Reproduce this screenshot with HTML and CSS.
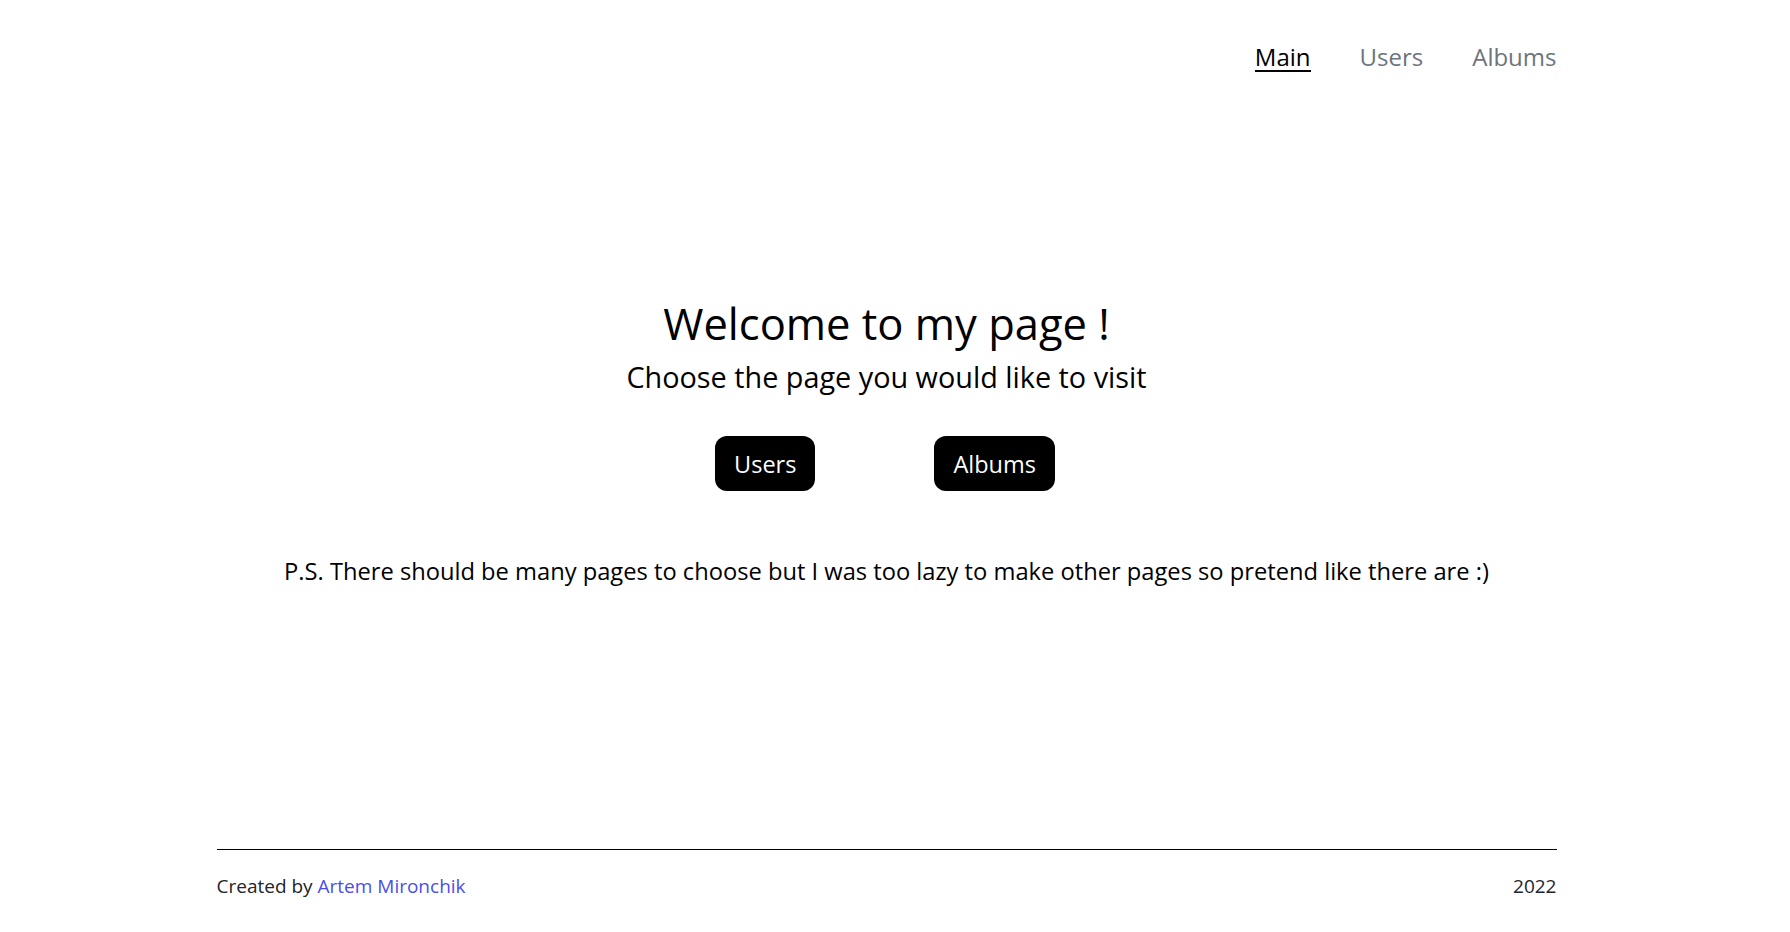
FILE: index.html
```html
<!DOCTYPE html>
<html lang="en">
<head>
<meta charset="utf-8">
<title>Main</title>
<link rel="stylesheet" href="styles.css">
</head>
<body>
<div class="page">
  <div class="container">
    <header class="header">
      <nav class="nav">
        <a class="nav-link active" href="#">Main</a>
        <a class="nav-link" href="#">Users</a>
        <a class="nav-link" href="#">Albums</a>
      </nav>
    </header>
    <main class="hero">
      <h1 class="hero-title">Welcome to my page !</h1>
      <p class="hero-subtitle">Choose the page you would like to visit</p>
      <div class="hero-buttons">
        <a class="btn" href="#">Users</a>
        <a class="btn" href="#">Albums</a>
      </div>
      <p class="hero-note">P.S. There should be many pages to choose but I was too lazy to make other pages so pretend like there are :)</p>
    </main>
    <footer class="footer">
      <span class="footer-credit">Created by <a class="footer-link" href="#">Artem Mironchik</a></span>
      <span class="footer-year">2022</span>
    </footer>
  </div>
</div>
</body>
</html>
```
FILE: styles.css
```css
* { box-sizing: border-box; }

html, body {
  margin: 0;
  padding: 0;
  background: #fff;
}

body {
  font-family: "Open Sans", "Noto Sans", sans-serif;
  color: #000;
}

.page {
  padding-right: 17px;
}

.container {
  width: 1340px;
  margin: 0 auto;
}

.header {
  display: flex;
  justify-content: flex-end;
  padding-top: 44px;
}

.nav {
  display: flex;
  gap: 49px;
}

.nav-link {
  display: inline-block;
  font-size: 24px;
  line-height: 26px;
  color: #6c757d;
  text-decoration: none;
  border-bottom: 2px solid transparent;
}

.nav-link.active {
  color: #000;
  border-bottom-color: #000;
}

.hero {
  margin-top: 226px;
  text-align: center;
}

.hero-title {
  margin: 0;
  font-size: 43.5px;
  line-height: 52px;
  font-weight: 400;
}

.hero-subtitle {
  margin: 9px 0 0;
  font-size: 28.8px;
  line-height: 36px;
}

.hero-buttons {
  display: flex;
  justify-content: center;
  gap: 119px;
  margin-top: 41px;
  padding-right: 3px;
}

.btn {
  display: inline-block;
  background: #000;
  color: #fff;
  text-decoration: none;
  font-size: 23.5px;
  line-height: 31px;
  padding: 13px 19px 11px;
  border-radius: 12px;
}

.hero-note {
  margin: 64px 0 0;
  font-size: 23.7px;
  line-height: 32px;
}

.footer {
  margin-top: 262px;
  border-top: 1px solid #000;
  padding-top: 24px;
  display: flex;
  justify-content: space-between;
  font-size: 19px;
  line-height: 24px;
  color: #212529;
}

.footer-link {
  color: #4b4fe6;
  text-decoration: none;
}
```
